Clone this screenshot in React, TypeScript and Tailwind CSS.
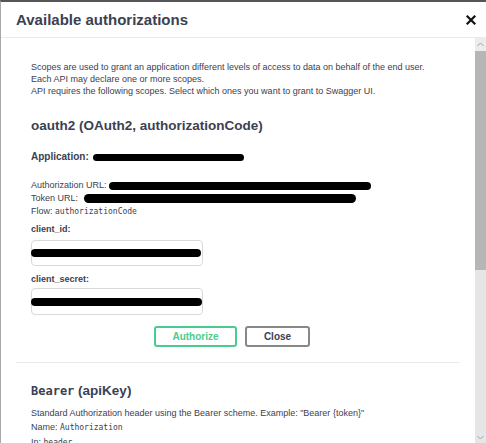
import React from "react";

function Redacted({ w, h = 8, className = "" }: { w: number; h?: number; className?: string }) {
  return (
    <span
      className={"inline-block rounded-full bg-black align-middle " + className}
      style={{ width: w, height: h }}
    />
  );
}

function CloseIcon() {
  return (
    <svg width="10" height="10" viewBox="0 0 10 10" className="block">
      <path d="M1.5 1.5 L8.5 8.5 M8.5 1.5 L1.5 8.5" stroke="#111" strokeWidth="2.2" strokeLinecap="square" />
    </svg>
  );
}

function Chevron({ up }: { up?: boolean }) {
  return (
    <svg width="7" height="5" viewBox="0 0 7 5" className="block">
      <path d={up ? "M0.5 4 L3.5 1 L6.5 4" : "M0.5 1 L3.5 4 L6.5 1"} stroke="#a3a3a3" strokeWidth="1" fill="none" />
    </svg>
  );
}

function Scrollbar() {
  return (
    <div className="w-[11px] flex flex-col bg-[#e6e6e6]">
      <div className="h-[13px] flex items-center justify-center bg-[#ececec]">
        <Chevron up />
      </div>
      <div className="h-[219px] bg-[#b6b6b6]" />
      <div className="flex-1" />
      <div className="h-[12px] flex items-center justify-center">
        <Chevron />
      </div>
    </div>
  );
}

export default function App() {
  return (
    <div className="w-[486px] h-[443px] overflow-hidden bg-white border-t-2 border-t-[#555] border-l border-l-[#a8a8a8] flex flex-col text-[#3b4151] font-['Liberation_Sans',Arial,sans-serif]">
      <header className="h-[36px] shrink-0 flex items-center justify-between pl-[15px] pr-[10px] border-b border-[#ebebeb]">
        <h3 className="text-[15px] font-bold leading-none">Available authorizations</h3>
        <CloseIcon />
      </header>

      <div className="flex flex-1 min-h-0">
        <div className="flex-1 overflow-hidden px-[15px]">
          <div className="px-[15px] pt-[23px] pb-[15px] border-b border-[#ebebeb]">
            <p className="text-[9px] leading-[12px]">
              Scopes are used to grant an application different levels of access to data on behalf of the end user.
              <br />
              Each API may declare one or more scopes.
            </p>
            <p className="text-[9px] leading-[12px]">
              API requires the following scopes. Select which ones you want to grant to Swagger UI.
            </p>

            <h4 className="mt-[19px] text-[13.5px] font-bold leading-[20px]">oauth2 (OAuth2, authorizationCode)</h4>

            <p className="mt-[15px] text-[10px] font-bold leading-[12px] flex items-center gap-[4px]">
              Application:
              <Redacted w={151} h={7} />
            </p>

            <div className="mt-[16px] text-[9px] leading-[13px]">
              <p className="flex items-center gap-[2px]">
                Authorization URL:
                <Redacted w={262} h={8} />
              </p>
              <p className="flex items-center gap-[6px]">
                Token URL:
                <Redacted w={272} h={9} />
              </p>
              <p>
                Flow: <code className="font-['DejaVu_Sans_Mono',monospace] text-[8px]">authorizationCode</code>
              </p>
            </div>

            <label className="block mt-[5px] text-[9px] font-bold leading-[12px]">client_id:</label>
            <div className="mt-[5px] w-[172px] h-[26px] rounded-[4px] border border-[#d9d9d9] flex items-center">
              <Redacted w={170} h={8} className="-ml-px" />
            </div>

            <label className="block mt-[7px] text-[9px] font-bold leading-[12px]">client_secret:</label>
            <div className="mt-[3px] w-[172px] h-[27px] rounded-[4px] border border-[#d9d9d9] flex items-center">
              <Redacted w={174} h={8} className="-ml-px" />
            </div>

            <div className="mt-[11px] ml-[123px] flex gap-[8px]">
              <button className="w-[83px] h-[21px] rounded-[3px] border-2 border-[#49cc90] text-[#49cc90] text-[10px] font-bold leading-none">
                Authorize
              </button>
              <button className="w-[65px] h-[21px] rounded-[3px] border-2 border-[#888] text-[#3b4151] text-[10px] font-bold leading-none">
                Close
              </button>
            </div>
          </div>

          <div className="px-[15px] pt-[18px]">
            <h4 className="text-[13.5px] font-bold leading-[20px]">
              <code className="font-['DejaVu_Sans_Mono',monospace] text-[12px]">Bearer</code> (apiKey)
            </h4>
            <div className="mt-[5px] text-[9px] leading-[14px]">
              <p>Standard Authorization header using the Bearer scheme. Example: "Bearer {"{token}"}"</p>
              <p>
                Name: <code className="font-['DejaVu_Sans_Mono',monospace] text-[8px]">Authorization</code>
              </p>
              <p>
                In: <code className="font-['DejaVu_Sans_Mono',monospace] text-[8px]">header</code>
              </p>
            </div>
          </div>
        </div>
        <Scrollbar />
      </div>
    </div>
  );
}
